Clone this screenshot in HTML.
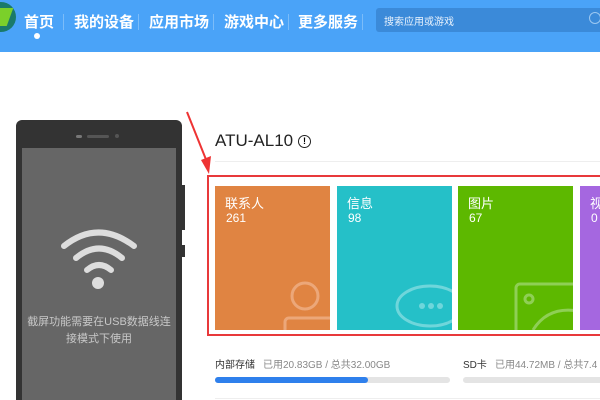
<!DOCTYPE html><html style="overflow:hidden;width:600px;height:400px"><head><meta charset="utf-8"><style>
body{margin:0;width:600px;height:400px;overflow:hidden;background:#fff;font-family:"Liberation Sans","Noto Sans CJK SC",sans-serif;position:relative}
.a{position:absolute}
.hd{left:0;top:0;width:600px;height:52px;background:#4aa3f8}
.nav{top:11px;color:#fff;font-size:15px;font-weight:bold}
.sep{top:14px;width:1px;height:16px;background:#7bbcf9}
.tile{top:186px;width:115px;height:144px;color:#fff;overflow:hidden}
.tile b{position:absolute;left:10px;top:7px;font-size:13px;font-weight:normal}
.tile i{position:absolute;left:11px;top:25px;font-size:12px;font-style:normal}
</style></head><body>
<div class="a hd"></div>
<div class="a" style="left:-14px;top:2px;width:30px;height:30px;border-radius:50%;background:#1a7a6a"></div>
<div class="a" style="left:-4px;top:8px;width:14px;height:18px;background:#7bd02a;transform:skewX(-20deg)"></div>
<div class="a nav" style="left:24px">首页</div>
<div class="a" style="left:34px;top:33px;width:6px;height:6px;border-radius:50%;background:#fff"></div>
<div class="a sep" style="left:63px"></div>
<div class="a nav" style="left:74px">我的设备</div>
<div class="a sep" style="left:138px"></div>
<div class="a nav" style="left:149px">应用市场</div>
<div class="a sep" style="left:213px"></div>
<div class="a nav" style="left:224px">游戏中心</div>
<div class="a sep" style="left:288px"></div>
<div class="a nav" style="left:298px">更多服务</div>
<div class="a sep" style="left:362px"></div>
<div class="a" style="left:376px;top:8px;width:230px;height:24px;border-radius:3px;background:#3b8ad9"></div>
<div class="a" style="left:384px;top:13px;color:#e8f2fd;font-size:10px">搜索应用或游戏</div>
<div class="a" style="left:589px;top:12px;width:10px;height:10px;border:1.5px solid #9cc8f2;border-radius:50%"></div>

<div class="a" style="left:16px;top:120px;width:166px;height:300px;background:#333;border-radius:6px"></div>
<div class="a" style="left:22px;top:148px;width:154px;height:260px;background:#666"></div>
<div class="a" style="left:76px;top:135px;width:6px;height:3px;background:#777;border-radius:2px"></div>
<div class="a" style="left:87px;top:135px;width:22px;height:3px;background:#555;border-radius:2px"></div>
<div class="a" style="left:115px;top:134px;width:4px;height:4px;background:#555;border-radius:50%"></div>
<div class="a" style="left:182px;top:185px;width:3px;height:45px;background:#333"></div>
<div class="a" style="left:182px;top:245px;width:3px;height:12px;background:#333"></div>
<svg class="a" style="left:60px;top:225px" width="80" height="70" viewBox="0 0 80 70"><g fill="none" stroke="#ddd" stroke-width="6" stroke-linecap="round"><path d="M4 21Q38 -6 74 21"/><path d="M16 33Q39 14 62 33"/><path d="M27 45Q39 35 51 45"/></g><circle cx="38" cy="58" r="6" fill="#ddd"/></svg>
<div class="a" style="left:22px;top:314px;width:154px;text-align:center;color:#c8c8c8;font-size:11px;line-height:17px">截屏功能需要在USB数据线连<br>接模式下使用</div>

<svg class="a" style="left:185px;top:110px" width="30" height="65"><path d="M2 2L22 52" stroke="#e33" stroke-width="2"/><path d="M16 50L24 64L26 46Z" fill="#e33"/></svg>
<div class="a" style="left:215px;top:131px;font-size:17px;color:#222">ATU-AL10</div>
<div class="a" style="left:298px;top:135px;width:11px;height:11px;border:1.3px solid #222;border-radius:50%;font-size:9px;text-align:center;line-height:11px;font-weight:bold">!</div>
<div class="a" style="left:215px;top:161px;width:385px;height:1px;background:#eee"></div>
<div class="a" style="left:207px;top:175px;width:400px;height:161px;border:2px solid #e8393b;box-sizing:border-box"></div>
<div class="a tile" style="left:215px;background:#e08442"><b>联系人</b><i>261</i><svg class="a" style="left:65px;top:90px" width="50" height="54"><circle cx="25" cy="20" r="13" fill="none" stroke="#eca779" stroke-width="3"/><rect x="5" y="42" width="50" height="20" rx="4" fill="none" stroke="#eca779" stroke-width="3"/></svg></div>
<div class="a tile" style="left:337px;background:#25c0c8"><b>信息</b><i>98</i><svg class="a" style="left:55px;top:95px" width="60" height="49"><ellipse cx="38" cy="25" rx="33" ry="20" fill="none" stroke="#6fd6db" stroke-width="3"/><circle cx="30" cy="25" r="3" fill="#6fd6db"/><circle cx="39" cy="25" r="3" fill="#6fd6db"/><circle cx="48" cy="25" r="3" fill="#6fd6db"/></svg></div>
<div class="a tile" style="left:458px;background:#5db800"><b>图片</b><i>67</i><svg class="a" style="left:55px;top:95px" width="61" height="49"><rect x="3" y="3" width="70" height="60" rx="4" fill="none" stroke="#8fcf55" stroke-width="3"/><circle cx="16" cy="18" r="4" fill="none" stroke="#8fcf55" stroke-width="3"/><path d="M20 49Q35 25 65 30" fill="none" stroke="#8fcf55" stroke-width="3"/></svg></div>
<div class="a tile" style="left:580px;background:#a567e0"><b>视</b><i>0</i></div>

<div class="a" style="left:215px;top:356px;font-size:10px;color:#333">内部存储</div>
<div class="a" style="left:263px;top:356px;font-size:10px;color:#888">已用20.83GB / 总共32.00GB</div>
<div class="a" style="left:215px;top:377px;width:235px;height:6px;border-radius:3px;background:#e4e4e4"></div>
<div class="a" style="left:215px;top:377px;width:153px;height:6px;border-radius:3px;background:#2f80ec"></div>
<div class="a" style="left:463px;top:356px;font-size:10px;color:#333">SD卡</div>
<div class="a" style="left:495px;top:356px;font-size:10px;color:#888;white-space:nowrap">已用44.72MB / 总共7.4</div>
<div class="a" style="left:463px;top:377px;width:150px;height:6px;border-radius:3px;background:#e4e4e4"></div>
<div class="a" style="left:215px;top:398px;width:385px;height:1px;background:#eee"></div>
</body></html>
